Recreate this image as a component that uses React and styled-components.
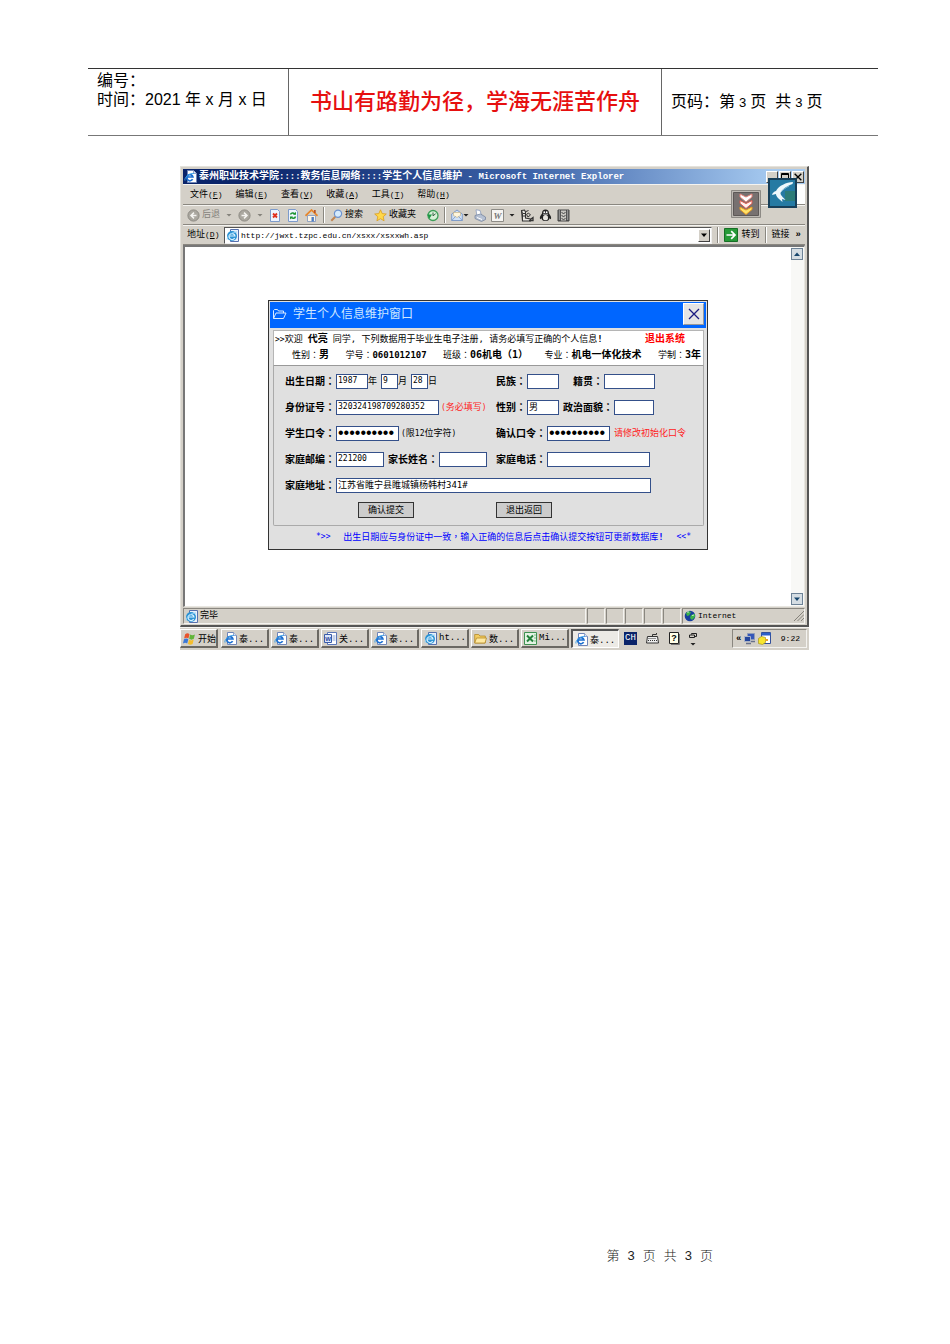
import { useState } from "react";
import styled, { createGlobalStyle } from "styled-components";

const GlobalStyle = createGlobalStyle`
  * {
    box-sizing: border-box;
  }
  body {
    margin: 0;
    background: #fff;
    color: #000;
    font-family: "Liberation Sans", "Noto Sans CJK SC", sans-serif;
  }
  button, input {
    font-family: inherit;
    font-size: inherit;
    color: inherit;
    margin: 0;
    padding: 0;
  }
  svg {
    display: block;
    flex: none;
  }
`;

/* document page */

const Sheet = styled.div`
  min-height: 100vh;
  display: flex;
  flex-direction: column;
  padding: 68px 72px 78px 88px;
`;

const PageHeader = styled.header`
  display: grid;
  grid-template-columns: 200px 1fr 217px;
  min-height: 68px;
  border-top: 1px solid #333;
  border-bottom: 1px solid #777;
  font-size: 16px;
  line-height: 19px;
`;

const HeaderCell = styled.div`
  padding: 2px 9px;
  border-left: ${(p) => (p.$line ? "1px solid #666" : "none")};
  display: flex;
  flex-direction: column;
  justify-content: ${(p) => (p.$line ? "center" : "flex-start")};
  white-space: nowrap;
`;

const Motto = styled.div`
  color: #e60f0f;
  font-size: 22px;
  font-weight: 500;
  line-height: 32px;
  text-align: center;
`;

const PageNo = styled.span`
  font-size: 13px;
  margin: 0 4px;
`;

const PageFooter = styled.footer`
  margin-top: auto;
  padding-right: 165px;
  display: flex;
  justify-content: flex-end;
  gap: 8px;
  font-size: 13px;
  line-height: 20px;
  font-weight: 300;
  color: #222;
`;

/* browser window */

const Desktop = styled.section`
  margin: 30px 69px 0 92px;
  background: #d4d0c8;
  font-family: "Liberation Mono", "Noto Sans CJK SC", monospace;
  font-size: 9px;
  line-height: 12px;
  white-space: nowrap;
`;

const Browser = styled.div`
  position: relative;
  padding: 2px 2px 1px;
  border: 1px solid #e4e2dc;
  border-right: 2px solid #555;
  border-bottom: 2px solid #555;
`;

const TitleBar = styled.div`
  display: flex;
  align-items: center;
  gap: 2px;
  height: 15px;
  padding: 0 1px;
  background: linear-gradient(90deg, #0a246a 10%, #3c62a8 55%, #a6caf0 95%);
  color: #fff;
  font-weight: bold;
`;

const TitleText = styled.h1`
  flex: 1;
  margin: 0;
  font-size: 10px;
  line-height: 14px;
  overflow: hidden;
`;

const TitleLatin = styled.span`
  font-size: 9px;
`;

const Latin = styled.span`
  font-size: 8px;
`;

const WinButton = styled.button`
  width: 12px;
  height: 12px;
  display: flex;
  align-items: center;
  justify-content: center;
  background: #d4d0c8;
  border: 1px solid;
  border-color: #fff #404040 #404040 #fff;
`;

const Bar = styled.div`
  display: flex;
  align-items: center;
  height: ${(p) => p.$height}px;
  padding: 0 4px;
  border-bottom: 1px solid #8a8780;
  border-top: 1px solid #f4f3f0;
`;

const Menu = styled(Bar)`
  gap: 13px;
  padding: 0 0 0 7px;
`;

const FlatButton = styled.button`
  display: flex;
  align-items: center;
  gap: ${(p) => p.$gap || 0}px;
  background: none;
  border: 0;
  line-height: 12px;
  color: ${(p) => (p.$disabled ? "#85827b" : "#000")};
`;

const MenuFlag = styled.div`
  margin-left: auto;
  width: 9px;
  height: 100%;
  background: #fff;
`;

const ToolGroup = styled.div`
  display: flex;
  align-items: center;
  gap: ${(p) => p.$gap}px;
`;

const Divider = styled.i`
  width: 2px;
  height: 16px;
  margin: 0 5px;
  border-left: 1px solid #8a8780;
  border-right: 1px solid #fff;
`;

const AddressLabel = styled.label`
  width: 37px;
`;

const AddressBox = styled.div`
  flex: 1;
  display: flex;
  align-items: center;
  gap: 2px;
  height: 17px;
  padding: 1px;
  background: #fff;
  border: 1px solid;
  border-color: #555 #eee #eee #555;
`;

const AddressInput = styled.input`
  flex: 1;
  min-width: 0;
  border: 0;
  outline: 0;
  background: none;
  font-size: 8px;
`;

const DropButton = styled(WinButton)`
  height: 13px;
`;

const ThrobberBadge = styled.div`
  position: absolute;
  top: 11px;
  right: 10px;
`;

const DownloadBadge = styled.div`
  position: absolute;
  top: 23px;
  right: 46px;
`;

const Viewport = styled.div`
  display: flex;
  background: #fff;
  border-top: 2px solid #777;
  border-left: 2px solid #777;
  border-right: 1px solid #e8e6e0;
  border-bottom: 1px solid #e8e6e0;
`;

const Content = styled.main`
  flex: 1;
  padding: 53px 24px 56px;
`;

const Scrollbar = styled.div`
  width: 13px;
  padding: 1px 0;
  display: flex;
  flex-direction: column;
  justify-content: space-between;
  background: #f8f8f6;
`;

const ScrollButton = styled.button`
  width: 12px;
  height: 12px;
  display: flex;
  align-items: center;
  justify-content: center;
  border: 1px solid #6d8296;
  background: #d5dde3;
`;

/* form dialog */

const Dialog = styled.div`
  max-width: 440px;
  margin: 0 auto;
  padding: 1px;
  border: 1px solid #333;
  background: #e0e0e0;
  font-family: "DejaVu Sans Mono", "Noto Sans CJK SC", monospace;
`;

const DialogTitle = styled.div`
  display: flex;
  align-items: center;
  gap: 6px;
  height: 26px;
  padding: 0 2px 2px 2px;
  background: #0066ff;
  color: #cfe6ff;
`;

const DialogName = styled.h2`
  flex: 1;
  margin: 0;
  font-size: 12px;
  line-height: 16px;
  font-weight: normal;
`;

const CloseButton = styled.button`
  width: 21px;
  height: 22px;
  display: flex;
  align-items: center;
  justify-content: center;
  background: #e4e4e4;
  border: 1px solid;
  border-color: #fff #999 #999 #fff;
`;

const Welcome = styled.div`
  margin: 2px 2px 0 3px;
  padding: 0 2px 2px 1px;
  background: #fff;
  border: 1px solid #b5b5b5;
  border-bottom-color: #999;
`;

const Greeting = styled.div`
  display: flex;
  align-items: center;
  gap: 5px;
  height: 16px;
`;

const Facts = styled.div`
  display: flex;
  align-items: center;
  justify-content: space-between;
  height: 16px;
  padding-left: 17px;
`;

const ExitLink = styled.a`
  margin-left: auto;
  padding-right: 16px;
  color: #f00;
  font-size: 10px;
  font-weight: bold;
  text-decoration: none;
`;

const Strong = styled.b`
  font-size: ${(p) => (p.$latin ? 9 : 10)}px;
`;

const CenteredMark = styled.span`
  font-family: "Noto Sans CJK TC", sans-serif;
`;

const Form = styled.form`
  margin: 0 2px 0 3px;
  padding: 2px 0 7px 11px;
  border: 1px solid #aaa;
  border-top: 0;
  border-radius: 0 0 2px 2px;
`;

const Row = styled.div`
  display: grid;
  grid-template-columns: ${(p) => (p.$single ? "366px" : "211px 1fr")};
  align-items: center;
  height: 26px;
`;

const Fields = styled.div`
  display: flex;
  align-items: center;
  gap: ${(p) => p.$gap || 4}px;
`;

const Field = styled.span`
  display: flex;
  align-items: center;
  flex: ${(p) => (p.$grow ? 1 : "none")};
`;

const Label = styled.label`
  font-size: 10px;
  font-weight: bold;
  margin-right: 1px;
`;

const Input = styled.input`
  width: ${(p) => (p.$width ? `${p.$width}px` : "100%")};
  height: 15px;
  padding: 0 1px 1px;
  border: 1px solid #34508a;
  background: #fff;
  outline: 0;
  font-size: ${(p) => (p.$cjk ? 9 : 8)}px;
  line-height: 12px;
`;

const Password = styled(Input)`
  padding: 0 1px;
  font-family: "Liberation Sans", sans-serif;
  font-size: 16px;
`;

const Note = styled.span`
  color: ${(p) => (p.$warn ? "#f22" : "#000")};
`;

const Actions = styled.div`
  display: grid;
  grid-template-columns: 138px 1fr;
  padding: 4px 0 0 73px;
`;

const ActionButton = styled.button`
  width: 56px;
  height: 16px;
  border: 1px solid #333;
  background: #ccc;
  line-height: 12px;
`;

const Hint = styled.p`
  margin: 0;
  padding: 3px 15px 3px 46px;
  display: flex;
  justify-content: space-between;
  color: #00f;
  line-height: 15px;
`;

/* status bar and taskbar */

const StatusBar = styled.div`
  display: flex;
  gap: 1px;
  height: 17px;
  padding-top: 1px;
`;

const StatusCell = styled.div`
  display: flex;
  align-items: center;
  gap: 2px;
  width: ${(p) => (p.$width ? `${p.$width}px` : "auto")};
  flex: ${(p) => (p.$width ? "none" : 1)};
  padding-left: 1px;
  border: 1px solid;
  border-color: #8a8780 #f4f3f0 #f4f3f0 #8a8780;
`;

const Taskbar = styled.div`
  display: flex;
  align-items: center;
  height: 23px;
  padding: 0 2px 1px 0;
  border-top: 1px solid #f4f3f0;
`;

const TaskButton = styled.button`
  display: flex;
  align-items: center;
  gap: 2px;
  width: ${(p) => p.$width || 48}px;
  height: 19px;
  padding-left: 2px;
  overflow: hidden;
  background: ${(p) => (p.$active ? "#eceae5" : "#d4d0c8")};
  border: solid;
  border-width: ${(p) => (p.$active ? "2px 1px 1px 2px" : "1px 2px 2px 1px")};
  border-color: ${(p) =>
    p.$active ? "#555 #fff #fff #555" : "#fff #6b6862 #6b6862 #fff"};
`;

const Tasks = styled.div`
  display: flex;
  gap: 2px;
  margin: 0 5px 0 3px;
`;

const LangTools = styled.div`
  display: flex;
  align-items: center;
  gap: 9px;
`;

const LangBadge = styled.span`
  width: 13px;
  height: 13px;
  background: #0a246a;
  color: #fff;
  font-size: 9px;
  line-height: 13px;
  text-align: center;
`;

const Tray = styled.div`
  margin-left: auto;
  display: flex;
  align-items: center;
  gap: 2px;
  width: 75px;
  height: 19px;
  padding: 0 6px 0 3px;
  border: 1px solid;
  border-color: #8a8780 #f4f3f0 #f4f3f0 #8a8780;
`;

const Clock = styled.time`
  margin-left: auto;
  font-size: 8px;
`;

/* icons */

const IeIcon = () => (
  <svg width="13" height="13" viewBox="0 0 13 13">
    <path d="M3.5.5h6l3 3v9h-9z" fill="#fff" stroke="#7186b8" />
    <path d="M9.5.5v3h3" fill="#dbe6f6" stroke="#7186b8" strokeWidth=".7" />
    <path
      d="M8.6 9.2A3.1 3.1 0 1 1 8.9 7H3.2"
      fill="none"
      stroke="#1d6fd0"
      strokeWidth="1.7"
    />
    <path d="M1 10.5C0 8 5 3 10 3.4" fill="none" stroke="#3aa0e8" />
  </svg>
);

const IeBlueIcon = () => (
  <svg width="13" height="13" viewBox="0 0 13 13">
    <path d="M4.5.5h8v12h-8z" fill="#e9f1fb" stroke="#5670ad" />
    <circle cx="6" cy="7" r="5" fill="#2c93d4" />
    <path
      d="M8.7 9A3 3 0 1 1 9 7H3.6"
      fill="none"
      stroke="#d8f1ff"
      strokeWidth="1.2"
    />
    <path d="M1 10.5C2 6 6 3 11 3" fill="none" stroke="#8fd0f5" />
  </svg>
);

const Caret = ({ up, color = "#333" }) => (
  <svg width="6" height="6" viewBox="0 0 6 6">
    <path d={up ? "M0 5l3-3.5L6 5z" : "M0 1.5h6L3 5z"} fill={color} />
  </svg>
);

const SmallCaret = ({ color = "#222" }) => (
  <svg width="6" height="6" viewBox="0 0 6 6">
    <path d="M.5 2h5L3 4.500z" fill={color} />
  </svg>
);

const RoundArrow = ({ back }) => (
  <svg width="13" height="13" viewBox="0 0 13 13">
    <circle cx="6.5" cy="6.5" r="5.6" fill="#aaa79f" stroke="#8d8a83" />
    <path
      d={back ? "M9.5 6.5h-5M7 3.6L4 6.5l3 2.9" : "M3.5 6.5h5M6 3.6l3 2.9-3 2.9"}
      fill="none"
      stroke="#f5f4f1"
      strokeWidth="1.5"
    />
  </svg>
);

const StopIcon = () => (
  <svg width="12" height="13" viewBox="0 0 12 13">
    <path d="M1.5.5h7l2 2v10h-9z" fill="#eef4fd" stroke="#7d9bcb" />
    <path d="M4 4.5l4 4M8 4.5l-4 4" stroke="#e0301e" strokeWidth="1.8" />
  </svg>
);

const RefreshIcon = () => (
  <svg width="12" height="13" viewBox="0 0 12 13">
    <path d="M1.5.5h7l2 2v10h-9z" fill="#eef4fd" stroke="#7d9bcb" />
    <path
      d="M3.5 5.5c.5-2 3-2 4.3-.6M8.5 7.5c-.5 2.2-3 2.2-4.3.7"
      fill="none"
      stroke="#1b9431"
      strokeWidth="1.5"
    />
    <path d="M9 2.8v3H6zM3 10.4v-3h3z" fill="#1b9431" />
  </svg>
);

const HomeIcon = () => (
  <svg width="13" height="13" viewBox="0 0 13 13">
    <path d="M2.5 6.5h8v6h-8z" fill="#fdf6e6" stroke="#7c93bd" strokeWidth=".8" />
    <path d="M.5 6.8L6.5 1l6 5.8" fill="none" stroke="#e8862a" strokeWidth="1.7" />
    <path d="M9 1h1.7v3H9z" fill="#b5532a" />
    <path d="M6.5 8h2.4v4.5H6.5z" fill="#4b7cc4" />
  </svg>
);

const SearchIcon = () => (
  <svg width="13" height="13" viewBox="0 0 13 13">
    <path d="M1.3 11.7l4-4" stroke="#c08552" strokeWidth="2" />
    <circle cx="8" cy="4.7" r="3.6" fill="#d4eafd" stroke="#6c93cf" strokeWidth="1.2" />
  </svg>
);

const StarIcon = () => (
  <svg width="13" height="13" viewBox="0 0 13 13">
    <path
      d="M6.5.8l1.7 3.8 4.1.4-3.1 2.7.9 4.1-3.6-2.1-3.6 2.1.9-4.1L.7 5l4.1-.4z"
      fill="#ffd84a"
      stroke="#dc9d1c"
      strokeWidth=".8"
    />
  </svg>
);

const HistoryIcon = () => (
  <svg width="12" height="13" viewBox="0 0 12 13">
    <circle cx="6" cy="6.5" r="5" fill="#d8f0d8" stroke="#3d9e58" strokeWidth="1.3" />
    <path d="M6 3.5v3.3l2.6-2" fill="none" stroke="#365e46" />
    <path d="M0 5.5h5l-2.5 4z" fill="#1c9743" />
  </svg>
);

const MailIcon = () => (
  <svg width="12" height="13" viewBox="0 0 12 13">
    <path d="M.7 5L6 1l5.3 4v6.5H.7z" fill="#cfe1f7" stroke="#7695c6" strokeWidth=".9" />
    <path d="M2.5 3.5h7v3L6 8.5l-3.5-2z" fill="#fff6dc" stroke="#c5ab77" strokeWidth=".6" />
    <path d="M.7 11.5l3.8-4M11.3 11.5l-3.8-4" stroke="#7695c6" strokeWidth=".8" />
  </svg>
);

const PrintIcon = () => (
  <svg width="12" height="13" viewBox="0 0 12 13">
    <path d="M2 .8l4 .6 1.5 5-4.5 1z" fill="#fff" stroke="#8a9cbd" strokeWidth=".8" />
    <path d="M1 6.5l5.5-1.500 5 3v2.500l-4 2L1 9.500z" fill="#b5c0d3" stroke="#78869f" strokeWidth=".8" />
    <path d="M3 8.5l5 2" stroke="#fff" />
  </svg>
);

const WordPageIcon = () => (
  <svg width="13" height="13" viewBox="0 0 13 13">
    <path d="M.5.5h12v12H.5z" fill="#f6f5f2" stroke="#8d8b86" />
    <text
      x="6.5"
      y="9.5"
      fontSize="9"
      fontStyle="italic"
      fontWeight="bold"
      fontFamily="Liberation Serif"
      textAnchor="middle"
      fill="#777"
    >
      W
    </text>
  </svg>
);

const ResearchIcon = () => (
  <svg width="14" height="13" viewBox="0 0 14 13" fill="none" stroke="#333">
    <path d="M1.5 1.5l3-.5 1 2v6l5 1v2h-8z" fill="#e9e7e2" strokeWidth="1.1" />
    <path d="M1.5 1.500l1 3v7.500M3 4.500h2M3 7h2M6 2.500l2.500-1M6.500 5.500l2-1.500 2 2-2.500 2z" />
    <path d="M9 11.500h4V8.500l-2 1.500" strokeWidth="1.300" />
  </svg>
);

const PenguinIcon = () => (
  <svg width="13" height="13" viewBox="0 0 13 13">
    <path
      d="M6.5.5c2.300 0 3.500 1.500 3.500 4 1.500 2 2.600 3.600 2 5.500-.5.500-1-.5-1.500-.8C10 11.500 8.500 12 6.500 12s-3.500-.5-4-2.800C2 9.500 1.500 10.500 1 10 .4 8.100 1.500 6.500 3 4.500c0-2.500 1.200-4 3.500-4z"
      fill="#222"
    />
    <ellipse cx="6.5" cy="8.7" rx="2.5" ry="2.6" fill="#e8e6e1" />
    <circle cx="5.3" cy="3.2" r=".9" fill="#fff" />
    <circle cx="7.7" cy="3.2" r=".9" fill="#fff" />
    <path d="M4 5.2h5" stroke="#bbb" />
  </svg>
);

const FilmIcon = () => (
  <svg width="13" height="13" viewBox="0 0 13 13">
    <path d="M1 1h11v11H1z" fill="#555" stroke="#444" />
    <path d="M4 1.5h5v10H4z" fill="#c9c7c2" />
    <path d="M4.5 3l2 2 2-2M4.5 6l2 2 2-2M4.5 9l2 2 2-2" fill="none" stroke="#444" />
    <path d="M2.3 1.5v10M10.7 1.5v10" stroke="#eee" strokeDasharray="1 1" />
  </svg>
);

const GoIcon = () => (
  <svg width="14" height="14" viewBox="0 0 14 14">
    <path d="M.5.5h13v13H.5z" fill="#279a38" stroke="#176f26" />
    <path d="M2.5 7h8M7.2 3.2L11 7l-3.800 3.800" fill="none" stroke="#fff" strokeWidth="1.7" />
  </svg>
);

const BirdIcon = () => (
  <svg width="29" height="30" viewBox="0 0 29 30">
    <path d="M1 1h27v28H1z" fill="#257aa3" stroke="#173f59" strokeWidth="2" />
    <path d="M17 13h10v10H17z" fill="#2c7c78" />
    <path
      d="M25 4C18 4.500 11 7.500 8 13c-2 .5-3.500 2-4 4l4-1c0 2 1.500 4 6.500 8l-.5-3 3.500 1c-2.500-3-5-4.500-5-7C14 11 19 8 24.500 6z"
      fill="#eef8fc"
    />
    <path d="M13 14c2-2.500 5-4.500 8-6" fill="none" stroke="#8cc1d8" />
  </svg>
);

const DownloadIcon = () => (
  <svg width="30" height="28" viewBox="0 0 30 28">
    <path d="M.5.5h29v27H.5z" fill="#bdb9b3" stroke="#8d8a85" />
    <path d="M2.5 2.5h25v23h-25z" fill="#777170" stroke="#5d5857" />
    <path d="M9 4l6 3 6-3v3l-6 5-6-5z" fill="#fff" stroke="#e58178" />
    <path d="M9 10.5l6 3 6-3v3l-6 5-6-5z" fill="#fff0ed" stroke="#e0564a" />
    <path d="M9 17l6 3 6-3v2.500l-6 5-6-5z" fill="#ffe36a" stroke="#e89a24" />
  </svg>
);

const FolderOpenIcon = () => (
  <svg width="15" height="12" viewBox="0 0 15 12" fill="none" stroke="#d8eaff">
    <path d="M1.5 10.500v-8l1-1h3l1 1.500h5v2" />
    <path d="M1.5 10.500l2.500-5.500h10l-2.500 5.500z" />
  </svg>
);

const CrossIcon = ({ size = 12, color = "#1a1a80" }) => (
  <svg width={size} height={size} viewBox="0 0 12 12">
    <path d="M1 1l10 10M11 1L1 11" stroke={color} strokeWidth={size > 8 ? 1.3 : 2} />
  </svg>
);

const GlobeIcon = () => (
  <svg width="12" height="12" viewBox="0 0 12 12">
    <circle cx="6" cy="6" r="5.3" fill="#183f9e" />
    <path d="M2 3l3-2 2 1.5-2 3-2 .5zM7 5l4-1v3l-3 3-2-2z" fill="#3bb34a" />
    <path d="M3 2h2M8 5.5l2-.5" stroke="#c9f0c9" />
  </svg>
);

const GripIcon = () => (
  <svg width="10" height="10" viewBox="0 0 10 10">
    <path d="M0 10L10 0M3.5 10L10 3.5M7 10l3-3" stroke="#85827b" />
  </svg>
);

const StartIcon = () => (
  <svg width="13" height="13" viewBox="0 0 12 12">
    <path d="M2 2c1.500-1 2.700-1 4 0l-1 4c-1.300-1-2.500-1-4 0z" fill="#e8542c" />
    <path d="M6.600 2.300c1.400 1 2.700 1 4.400 0l-1 4c-1.500 1-2.900 1-4.300 0z" fill="#62b53a" />
    <path d="M.9 6.700c1.500-1 2.700-1 4 0l-1 4c-1.300-1-2.500-1-4 0z" fill="#3b78d6" />
    <path d="M5.500 7c1.400 1 2.700 1 4.400 0l-1 4c-1.500 1-2.900 1-4.300 0z" fill="#f5bd2b" />
  </svg>
);

const WordIcon = () => (
  <svg width="13" height="13" viewBox="0 0 13 13">
    <path d="M3.5.5h9v12h-9z" fill="#fff" stroke="#5b77b8" />
    <path d="M8.5 4h3M8.5 6h3M8.5 8h3" stroke="#8ca5d6" />
    <path d="M.5 2.5h7v8h-7z" fill="#dbe6fa" stroke="#3b5ca8" />
    <text
      x="4"
      y="8.7"
      fontSize="6"
      fontWeight="bold"
      fontFamily="Liberation Sans"
      textAnchor="middle"
      fill="#26499c"
    >
      W
    </text>
  </svg>
);

const FolderIcon = () => (
  <svg width="13" height="13" viewBox="0 0 13 13">
    <path d="M.7 11V2.5h4L5.900 4h5.400v7z" fill="#f3cd62" stroke="#b58a2a" strokeWidth=".8" />
    <path d="M.7 11l1.800-5h10L11 11z" fill="#ffe9a0" stroke="#b58a2a" strokeWidth=".8" />
  </svg>
);

const ExcelIcon = () => (
  <svg width="13" height="13" viewBox="0 0 13 13">
    <path d="M.5.5h12v12H.5z" fill="#e4f3e4" stroke="#3f9150" />
    <path d="M3 3.5l6 6M9 3.5l-6 6" stroke="#23823a" strokeWidth="2" />
    <path d="M10 3h2M10 6h2M10 9h2" stroke="#7fba8a" />
  </svg>
);

const KeyboardIcon = () => (
  <svg width="13" height="11" viewBox="0 0 13 11" fill="none" stroke="#333">
    <path d="M1.5 3.5h10l1 6.500H.5z" fill="#eee" />
    <path d="M2.500 5.500h8M2 7.500h9" strokeDasharray="1 1" />
    <path d="M6.500 3.500V1.500h4V0" />
  </svg>
);

const HelpIcon = () => (
  <svg width="12" height="13" viewBox="0 0 12 13">
    <path d="M1.5.5h9v11h-9z" fill="#ffffe8" stroke="#222" />
    <path d="M11.5 2v10.500H3" fill="none" stroke="#777" />
    <text
      x="6"
      y="9"
      fontSize="9"
      fontWeight="bold"
      fontFamily="Liberation Sans"
      textAnchor="middle"
    >
      ?
    </text>
  </svg>
);

const RestoreIcon = () => (
  <svg width="8" height="14" viewBox="0 0 8 14" fill="none" stroke="#222">
    <path d="M2.5 2.5v-1h5v3H6M.5 3h5v2.500h-5z" />
    <path d="M1.5 11h5L4 13.500z" fill="#222" stroke="none" />
  </svg>
);

const NetworkIcon = () => (
  <svg width="13" height="13" viewBox="0 0 13 13">
    <path d="M4.5 1.5h7v6h-7z" fill="#3557b8" stroke="#8e9bb8" />
    <path d="M1.5 4.5h6v5h-6z" fill="#24469c" stroke="#aab3c8" />
    <path d="M3 11.5h5M8 9.5h4" stroke="#69718a" strokeWidth="1.5" />
  </svg>
);

const AppIcon = () => (
  <svg width="13" height="13" viewBox="0 0 13 13">
    <path d="M3.5.5h9v11h-9z" fill="#fff" stroke="#33509a" />
    <path d="M3.5 1h9v2.500h-9z" fill="#2c5fc8" />
    <path d="M.5 6.5l3-2 4 1v5l-3 2-4-1z" fill="#f7e62e" stroke="#a8971a" strokeWidth=".7" />
    <path d="M7 7h3v2H7z" fill="#e8a727" />
  </svg>
);

const menus = [
  ["文件", "F"],
  ["编辑", "E"],
  ["查看", "V"],
  ["收藏", "A"],
  ["工具", "T"],
  ["帮助", "H"],
];

const facts = [
  ["性别", "男"],
  ["学号", "0601012107", true],
  ["班级", "06机电\uff081\uff09"],
  ["专业", "机电一体化技术"],
  ["学制", "3年"],
];

const tasks = [
  { icon: IeIcon, text: "泰..." },
  { icon: IeIcon, text: "泰..." },
  { icon: WordIcon, text: "关..." },
  { icon: IeIcon, text: "泰..." },
  { icon: IeBlueIcon, text: "ht..." },
  { icon: FolderIcon, text: "数..." },
  { icon: ExcelIcon, text: "Mi..." },
  { icon: IeIcon, text: "泰...", active: true },
];

const Colon = () => <CenteredMark>{"\uff1a"}</CenteredMark>;

function TextField({ id, label, width, value = "", password, cjk, grow }) {
  const [text, setText] = useState(value);
  const Box = password ? Password : Input;
  return (
    <Field $grow={grow}>
      <Label htmlFor={id}>
        {label}
        <Colon />
      </Label>
      <Box
        id={id}
        type={password ? "password" : "text"}
        $width={width}
        $cjk={cjk}
        value={text}
        onChange={(e) => setText(e.target.value)}
      />
    </Field>
  );
}

function DatePart({ width, value, unit }) {
  return (
    <Field>
      <Input $width={width} defaultValue={value} aria-label={unit} />
      {unit}
    </Field>
  );
}

function StudentForm() {
  return (
    <Dialog>
      <DialogTitle>
        <FolderOpenIcon />
        <DialogName>学生个人信息维护窗口</DialogName>
        <CloseButton type="button" aria-label="关闭">
          <CrossIcon />
        </CloseButton>
      </DialogTitle>
      <Welcome>
        <Greeting>
          <span>
            <Latin>&gt;&gt;</Latin>欢迎
          </span>
          <Strong>代亮</Strong>
          <span>
            同学, 下列数据用于毕业生电子注册, 请务必填写正确的个人信息<b>!</b>
          </span>
          <ExitLink href="#exit">退出系统</ExitLink>
        </Greeting>
        <Facts>
          {facts.map(([name, value, latin]) => (
            <span key={name}>
              {name}
              <Colon />
              <Strong $latin={latin}>{value}</Strong>
            </span>
          ))}
        </Facts>
      </Welcome>
      <Form onSubmit={(e) => e.preventDefault()}>
        <Row>
          <Fields>
            <Field>
              <Label htmlFor="year">
                出生日期
                <Colon />
              </Label>
              <Input id="year" $width={32} defaultValue="1987" />
              年
            </Field>
            <DatePart width={17} value="9" unit="月" />
            <DatePart width={17} value="28" unit="日" />
          </Fields>
          <Fields $gap={14}>
            <TextField id="nation" label="民族" width={32} />
            <TextField id="origin" label="籍贯" width={51} />
          </Fields>
        </Row>
        <Row>
          <Fields $gap={2}>
            <TextField id="idno" label="身份证号" width={103} value="320324198709280352" />
            <Note $warn>
              <Latin>(</Latin>务必填写<Latin>)</Latin>
            </Note>
          </Fields>
          <Fields>
            <TextField id="sex" label="性别" width={32} value="男" cjk />
            <TextField id="party" label="政治面貌" width={40} />
          </Fields>
        </Row>
        <Row>
          <Fields $gap={2}>
            <TextField id="pwd" label="学生口令" width={63} value="0601012107" password />
            <Note>
              <Latin>(</Latin>限<Latin>12</Latin>位字符<Latin>)</Latin>
            </Note>
          </Fields>
          <Fields>
            <TextField id="pwd2" label="确认口令" width={63} value="0601012107" password />
            <Note $warn>请修改初始化口令</Note>
          </Fields>
        </Row>
        <Row>
          <Fields>
            <TextField id="zip" label="家庭邮编" width={48} value="221200" />
            <TextField id="parent" label="家长姓名" width={48} />
          </Fields>
          <Fields>
            <TextField id="phone" label="家庭电话" width={103} />
          </Fields>
        </Row>
        <Row $single>
          <TextField
            id="address"
            label="家庭地址"
            value="江苏省睢宁县睢城镇杨韩村341#"
            cjk
            grow
          />
        </Row>
        <Actions>
          <ActionButton type="submit">确认提交</ActionButton>
          <ActionButton type="button">退出返回</ActionButton>
        </Actions>
      </Form>
      <Hint>
        <Latin>*&gt;&gt;</Latin>
        <span>
          出生日期应与身份证中一致
          <CenteredMark>{"\uff0c"}</CenteredMark>
          输入正确的信息后点击确认提交按钮可更新数据库<b>!</b>
        </span>
        <Latin>&lt;&lt;*</Latin>
      </Hint>
    </Dialog>
  );
}

function Toolbar() {
  return (
    <Bar $height={20}>
      <ToolGroup $gap={6}>
        <FlatButton $gap={2} $disabled>
          <RoundArrow back />
          后退
        </FlatButton>
        <SmallCaret color="#85827b" />
        <FlatButton aria-label="前进">
          <RoundArrow />
        </FlatButton>
        <SmallCaret color="#85827b" />
        <FlatButton aria-label="停止">
          <StopIcon />
        </FlatButton>
        <FlatButton aria-label="刷新">
          <RefreshIcon />
        </FlatButton>
        <FlatButton aria-label="主页">
          <HomeIcon />
        </FlatButton>
      </ToolGroup>
      <Divider />
      <ToolGroup $gap={11}>
        <FlatButton $gap={2}>
          <SearchIcon />
          搜索
        </FlatButton>
        <FlatButton $gap={2}>
          <StarIcon />
          收藏夹
        </FlatButton>
        <FlatButton aria-label="历史">
          <HistoryIcon />
        </FlatButton>
      </ToolGroup>
      <Divider />
      <ToolGroup $gap={5}>
        <FlatButton aria-label="邮件">
          <MailIcon />
          <SmallCaret />
        </FlatButton>
        <FlatButton aria-label="打印">
          <PrintIcon />
        </FlatButton>
        <FlatButton $gap={5} aria-label="编辑">
          <WordPageIcon />
          <SmallCaret />
        </FlatButton>
        <FlatButton aria-label="信息检索">
          <ResearchIcon />
        </FlatButton>
        <FlatButton aria-label="QQ">
          <PenguinIcon />
        </FlatButton>
        <FlatButton aria-label="下载">
          <FilmIcon />
        </FlatButton>
      </ToolGroup>
    </Bar>
  );
}

export default function App() {
  return (
    <>
      <GlobalStyle />
      <Sheet>
        <PageHeader>
          <HeaderCell>
            <span>编号{"\uff1a"}</span>
            <span>时间{"\uff1a"}2021 年 x 月 x 日</span>
          </HeaderCell>
          <HeaderCell $line>
            <Motto>书山有路勤为径{"\uff0c"}学海无涯苦作舟</Motto>
          </HeaderCell>
          <HeaderCell $line>
            <span>
              页码{"\uff1a"}第<PageNo>3</PageNo>页&nbsp; 共<PageNo>3</PageNo>页
            </span>
          </HeaderCell>
        </PageHeader>

        <Desktop>
          <Browser>
            <TitleBar>
              <IeIcon />
              <TitleText>
                泰州职业技术学院<TitleLatin>::::</TitleLatin>教务信息网络
                <TitleLatin>::::</TitleLatin>学生个人信息维护
                <TitleLatin> - Microsoft Internet Explorer</TitleLatin>
              </TitleText>
              <ToolGroup $gap={1}>
                <WinButton aria-label="最小化">
                  <svg width="8" height="8">
                    <path d="M1 7h5" stroke="#000" strokeWidth="2" />
                  </svg>
                </WinButton>
                <WinButton aria-label="最大化">
                  <svg width="8" height="8" fill="none" stroke="#000">
                    <path d="M.5.5h7v7h-7zM.5 1.5h7" />
                  </svg>
                </WinButton>
                <WinButton aria-label="关闭">
                  <CrossIcon size={8} color="#000" />
                </WinButton>
              </ToolGroup>
            </TitleBar>
            <Menu $height={21}>
              {menus.map(([name, key]) => (
                <FlatButton key={key}>
                  {name}
                  <Latin>
                    (<u>{key}</u>)
                  </Latin>
                </FlatButton>
              ))}
              <MenuFlag />
            </Menu>
            <Toolbar />
            <Bar $height={20}>
              <AddressLabel htmlFor="url">
                地址
                <Latin>
                  (<u>D</u>)
                </Latin>
              </AddressLabel>
              <AddressBox>
                <IeBlueIcon />
                <AddressInput
                  id="url"
                  defaultValue="http://jwxt.tzpc.edu.cn/xsxx/xsxxwh.asp"
                />
                <DropButton aria-label="地址列表">
                  <Caret color="#000" />
                </DropButton>
              </AddressBox>
              <Divider />
              <FlatButton $gap={4}>
                <GoIcon />
                转到
              </FlatButton>
              <Divider />
              <FlatButton $gap={6}>
                链接 <b>»</b>
              </FlatButton>
            </Bar>
            <Viewport>
              <Content>
                <StudentForm />
              </Content>
              <Scrollbar>
                <ScrollButton aria-label="向上滚动">
                  <Caret up color="#17466d" />
                </ScrollButton>
                <ScrollButton aria-label="向下滚动">
                  <Caret color="#17466d" />
                </ScrollButton>
              </Scrollbar>
            </Viewport>
            <StatusBar>
              <StatusCell>
                <IeBlueIcon />
                完毕
              </StatusCell>
              {[1, 2, 3, 4, 5].map((n) => (
                <StatusCell key={n} $width={18} />
              ))}
              <StatusCell $width={123}>
                <GlobeIcon />
                <Latin>Internet</Latin>
                <Field $grow />
                <GripIcon />
              </StatusCell>
            </StatusBar>
            <DownloadBadge>
              <DownloadIcon />
            </DownloadBadge>
            <ThrobberBadge>
              <BirdIcon />
            </ThrobberBadge>
          </Browser>
          <Taskbar>
            <TaskButton $width={38}>
              <StartIcon />
              开始
            </TaskButton>
            <Tasks>
              {tasks.map(({ icon: Icon, text, active }, i) => (
                <TaskButton key={i} $active={active}>
                  <Icon />
                  {text}
                </TaskButton>
              ))}
            </Tasks>
            <LangTools>
              <LangBadge>CH</LangBadge>
              <KeyboardIcon />
              <HelpIcon />
              <RestoreIcon />
            </LangTools>
            <Tray>
              <b>«</b>
              <NetworkIcon />
              <AppIcon />
              <Clock>9:22</Clock>
            </Tray>
          </Taskbar>
        </Desktop>

        <PageFooter>
          <span>第</span>
          <span>3</span>
          <span>页</span>
          <span>共</span>
          <span>3</span>
          <span>页</span>
        </PageFooter>
      </Sheet>
    </>
  );
}
